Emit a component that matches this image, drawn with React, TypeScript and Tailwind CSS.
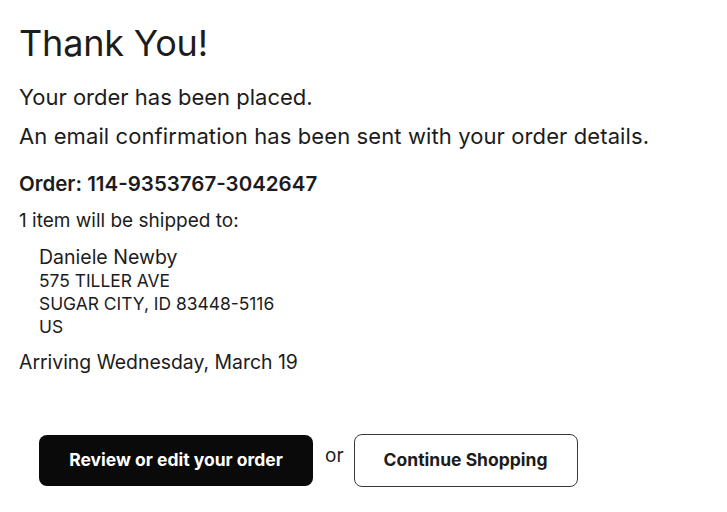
import React from 'react';

const font = { fontFamily: 'Inter, "Liberation Sans", sans-serif' };

export default function App() {
  return (
    <div className="min-h-[512px] bg-white text-[#1c1c1c] pl-[19px]" style={font}>
      <h1 className="pt-[21px] text-[36px] leading-[44px] font-normal tracking-[-0.2px]">Thank You!</h1>

      <p className="mt-[13px] text-[22px] leading-[39px]">Your order has been placed.</p>
      <p className="text-[22px] leading-[39px] tracking-[0.1px]">An email confirmation has been sent with your order details.</p>

      <p className="mt-[14px] text-[20.5px] leading-[28px] font-semibold">Order: 114-9353767-3042647</p>
      <p className="mt-[10px] text-[19px] leading-[26px]">1 item will be shipped to:</p>

      <div className="mt-[11px] pl-[20px]">
        <p className="text-[19.5px] leading-[24px]">Daniele Newby</p>
        <p className="text-[17.4px] leading-[23px]">575 TILLER AVE</p>
        <p className="text-[17.4px] leading-[23px]">SUGAR CITY, ID 83448-5116</p>
        <p className="text-[17.4px] leading-[23px]">US</p>
      </div>

      <p className="mt-[12px] text-[19.4px] leading-[24px]">Arriving Wednesday, March 19</p>

      <div className="mt-[60px] pl-[20px] flex items-center">
        <button className="w-[274px] h-[51px] rounded-[8px] bg-[#0a0a0a] text-white text-[17.5px] font-bold">
          Review or edit your order
        </button>
        <span className="ml-[12px] mr-[10px] text-[19px] -mt-[8px]">or</span>
        <button className="w-[224px] h-[53px] rounded-[8px] border border-[#3a3a3a] bg-white text-[17.5px] font-bold">
          Continue Shopping
        </button>
      </div>
    </div>
  );
}
